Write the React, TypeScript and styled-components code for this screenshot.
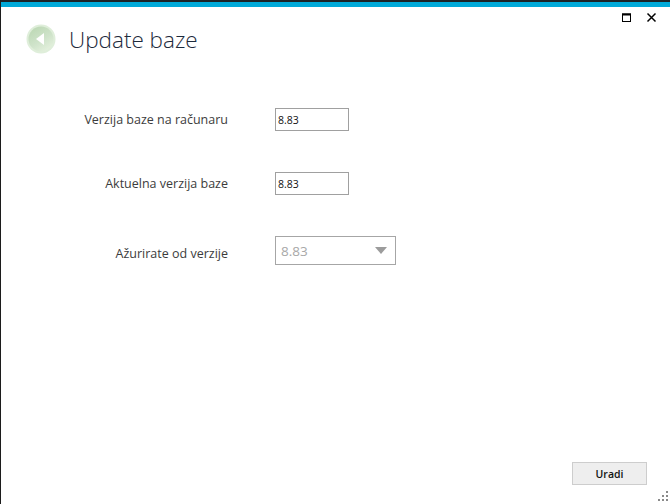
import React from "react";
import styled, { createGlobalStyle } from "styled-components";

const GlobalStyle = createGlobalStyle`
  html, body {
    margin: 0;
    padding: 0;
    background: #fff;
  }
`;

const rows = [
  { label: "Verzija baze na računaru", value: "8.83" },
  { label: "Aktuelna verzija baze", value: "8.83" },
];

const App = () => {
  return (
    <Window>
      <GlobalStyle />
      <AccentBar />
      <Controls>
        <ControlButton aria-label="maximize">
          <svg width="10" height="10" viewBox="0 0 10 10">
            <rect x="0.5" y="1" width="8" height="7.5" fill="none" stroke="#000" />
            <rect x="0" y="0.5" width="9" height="2" fill="#000" />
          </svg>
        </ControlButton>
        <ControlButton aria-label="close">
          <svg width="11" height="11" viewBox="0 0 11 11">
            <path d="M1.5 1.5 L9.5 9.5 M9.5 1.5 L1.5 9.5" stroke="#000" strokeWidth="1.5" fill="none" />
          </svg>
        </ControlButton>
      </Controls>
      <Header>
        <BackButton aria-label="back">
          <svg width="30" height="30" viewBox="0 0 30 30">
            <defs>
              <linearGradient id="backFill" x1="0.2" y1="0" x2="0.8" y2="1">
                <stop offset="0" stopColor="#bcd8b4" />
                <stop offset="0.55" stopColor="#cfe3ca" />
                <stop offset="1" stopColor="#e6f2df" />
              </linearGradient>
            </defs>
            <circle cx="15" cy="15" r="14.5" fill="#dfeeda" />
            <circle cx="15" cy="15" r="12.5" fill="url(#backFill)" />
            <path d="M10 15 L18 9 V21 Z" fill="#fff" />
          </svg>
        </BackButton>
        <Title>Update baze</Title>
      </Header>
      <Form>
        {rows.map((row) => (
          <Row key={row.label}>
            <Label>{row.label}</Label>
            <TextBox readOnly value={row.value} />
          </Row>
        ))}
        <Row>
          <Label $low>Ažurirate od verzije</Label>
          <Select>
            <span>8.83</span>
            <Caret />
          </Select>
        </Row>
      </Form>
      <Footer>
        <ActionButton>Uradi</ActionButton>
      </Footer>
      <Grip width="12" height="12" viewBox="0 0 12 12">
        <g fill="#8a8a8a">
          <rect x="9" y="1" width="2" height="2" />
          <rect x="5" y="5" width="2" height="2" />
          <rect x="9" y="5" width="2" height="2" />
          <rect x="1" y="9" width="2" height="2" />
          <rect x="5" y="9" width="2" height="2" />
          <rect x="9" y="9" width="2" height="2" />
        </g>
      </Grip>
    </Window>
  );
};

const Window = styled.div`
  position: relative;
  display: flex;
  flex-direction: column;
  box-sizing: border-box;
  width: 670px;
  height: 504px;
  overflow: hidden;
  background: #fff;
  border-left: 1px solid #1c1c1c;
  font-family: "Open Sans", "Noto Sans", "Liberation Sans", sans-serif;
  color: #222;
`;
const AccentBar = styled.div`
  height: 5px;
  flex: none;
  background: #00a9d8;
  border-top: 2px solid #1c2226;
`;
const Controls = styled.div`
  position: absolute;
  top: 12px;
  right: 13px;
  display: flex;
  align-items: center;
  gap: 14px;
`;
const ControlButton = styled.button`
  display: flex;
  align-items: center;
  justify-content: center;
  width: 11px;
  height: 11px;
  padding: 0;
  border: none;
  background: none;
`;
const Header = styled.header`
  display: flex;
  align-items: center;
  gap: 13px;
  height: 30px;
  margin-top: 17px;
  padding-left: 25px;
`;
const BackButton = styled.button`
  display: flex;
  width: 30px;
  height: 30px;
  padding: 0;
  border: none;
  background: none;
`;
const Title = styled.h1`
  margin: 2px 0 0;
  font-size: 22.5px;
  font-weight: 300;
  line-height: 30px;
  color: #1d2a3c;
`;
const Form = styled.div`
  display: flex;
  flex-direction: column;
  gap: 41px;
  margin-top: 54px;
`;
const Row = styled.div`
  display: flex;
  align-items: center;
  gap: 47px;
`;
const Label = styled.label<{ $low?: boolean }>`
  width: 227px;
  text-align: right;
  font-size: 12.5px;
  color: #3c3c3c;
  ${({ $low }) => $low && "padding-top: 6px;"}
`;
const TextBox = styled.input`
  box-sizing: border-box;
  width: 74px;
  height: 23px;
  padding: 0 2px;
  border: 1px solid #a0a0a0;
  border-radius: 0;
  outline: none;
  font-family: inherit;
  font-size: 10.5px;
  color: #111;
`;
const Select = styled.div`
  display: flex;
  align-items: center;
  justify-content: space-between;
  box-sizing: border-box;
  width: 121px;
  height: 29px;
  padding: 0 8px 0 5px;
  border: 1px solid #a6a6a6;
  font-size: 13.5px;
  color: #a8a8a8;
`;
const Caret = styled.i`
  width: 0;
  height: 0;
  border-left: 6px solid transparent;
  border-right: 6px solid transparent;
  border-top: 7px solid #9c9c9c;
`;
const Footer = styled.footer`
  display: flex;
  justify-content: flex-end;
  margin-top: auto;
  padding: 0 23px 19px 0;
`;
const ActionButton = styled.button`
  box-sizing: border-box;
  width: 75px;
  height: 23px;
  padding: 0;
  border: 1px solid #cdcdcd;
  background: #eeeeee;
  font-family: inherit;
  font-size: 10.5px;
  font-weight: 600;
  color: #111;
`;
const Grip = styled.svg`
  position: absolute;
  right: 1px;
  bottom: 2px;
`;

export default App;
